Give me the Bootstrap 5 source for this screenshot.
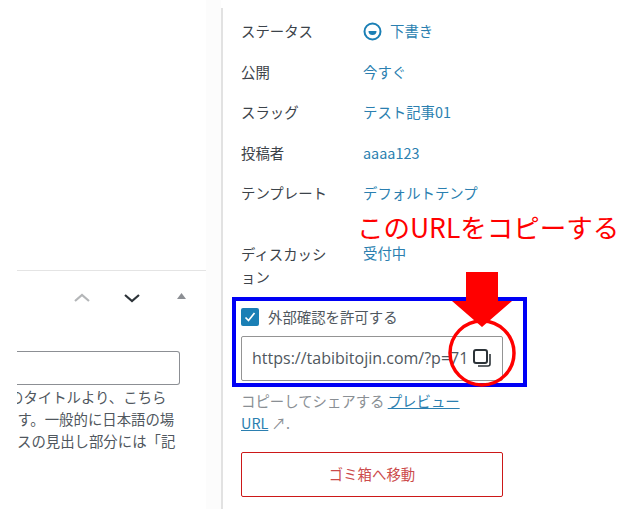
<!DOCTYPE html>
<html lang="ja"><head><meta charset="utf-8">
<link href="https://cdn.jsdelivr.net/npm/bootstrap@5.3.0/dist/css/bootstrap.min.css" rel="stylesheet">
<style>
html,body{margin:0;background:#fff;overflow:hidden}
body{font-family:"Noto Sans CJK JP","Noto Sans",sans-serif;font-size:14.4px;color:#3c434a;line-height:20px}
.stage{position:relative;width:628px;height:509px;overflow:hidden}
.leftpane{width:221px;padding-left:17px;flex:none;background:linear-gradient(90deg,#fff 206px,#fcfcfc 206px)}
.rule-top{height:1px;background:#e4e4e4;margin-top:270px;width:189px}
.tools{height:80px;width:189px;padding-top:17px}
.tools svg{display:block}
.blank-input{height:34px;width:163px;border:1px solid #8c8f94;border-left:0;border-radius:0 3px 3px 0;background:#fff}
.helptext{width:172px;font-size:14.4px;line-height:22px;margin-top:0;color:#50575e;white-space:nowrap;overflow:hidden;padding-top:1px}
.ln-a{margin-left:-8px}
.ln-b{margin-left:-14px}
.sidepane{width:275px;height:501px;margin-top:8px;border-left:2px solid #e2e2e2;padding:3px 0 0 18px;flex:none;background:#fff}
.meta-row{height:40.5px;display:flex;align-items:center}
.meta-k{width:122px;flex:none;color:#3c434a}
.meta-v{color:#2b7fb0;white-space:nowrap}
.meta-wrap{height:62px;align-items:flex-start;padding-top:16px;margin-top:12px}
.meta-wrap .meta-k{width:122px;padding-right:30px;line-height:23px}
.meta-wrap .meta-v{margin-top:1px}
.chk-row{margin-top:19px;height:20px;gap:9px;color:#50575e}
.chk-box{width:18px;height:18px;background:#1a7fb5;border-radius:2px;flex:none}
.url-field{width:262px;height:45px;border:1px solid #949494;border-radius:2px;margin-top:9px;padding-left:10px;font-family:"Open Sans","Noto Sans",sans-serif;font-size:16px;color:#50575e;background:#fff;overflow:hidden}
.url-field span{flex:1;white-space:nowrap;overflow:hidden}
.url-field svg{margin-right:10px;flex:none}
.sharehelp{width:235px;margin-top:9px;line-height:22px;color:#8a8f94}
.sharehelp a{color:#2b7fb0}
.trash{width:262px;height:45px;margin-top:18px;border:1px solid #cc1818;border-radius:2px;color:#cc4b4b}
.blue-frame{position:absolute;left:232px;top:297px;width:295px;height:90px;border:4px solid #0000f5}
.callout{position:absolute;left:357px;top:208px;font-size:26.5px;line-height:38px;color:#f00;white-space:nowrap;font-family:"Noto Sans CJK JP",sans-serif;background:#fff;padding-right:4px}
.overlay-svg{position:absolute;left:0;top:0}
</style></head><body>
<div class="stage d-flex">
  <div class="leftpane">
    <div class="rule-top"></div>
    <div class="tools d-flex align-items-start">
      <svg width="189" height="16" viewBox="0 0 189 16"><path d="M58 13l7-6 7 6" fill="none" stroke="#b4b6b8" stroke-width="2.2"/><path d="M108 7l7 6 7-6" fill="none" stroke="#2c3338" stroke-width="2.2"/><path d="M160 11l4.500-6 4.500 6z" fill="#8c8f94"/></svg>
    </div>
    <div class="blank-input"></div>
    <div class="helptext"><div class="ln-a">のタイトルより、こちら</div><div class="ln-b">です。一般的に日本語の場</div><div>スの見出し部分には「記</div></div>
  </div>
  <div class="sidepane">
    <div class="meta-row"><div class="meta-k">ステータス</div><div class="meta-v d-flex align-items-center gap-2"><svg width="19" height="19" viewBox="0 0 19 19"><circle cx="9.500" cy="9.500" r="8" fill="none" stroke="#1a7fb5" stroke-width="2"/><path d="M5.500 9h8a4 4 0 0 1-8 0z" fill="#1a7fb5"/></svg><span>下書き</span></div></div>
    <div class="meta-row"><div class="meta-k">公開</div><div class="meta-v">今すぐ</div></div>
    <div class="meta-row"><div class="meta-k">スラッグ</div><div class="meta-v">テスト記事01</div></div>
    <div class="meta-row"><div class="meta-k">投稿者</div><div class="meta-v">aaaa123</div></div>
    <div class="meta-row"><div class="meta-k">テンプレート</div><div class="meta-v">デフォルトテンプ</div></div>
    <div class="meta-row meta-wrap"><div class="meta-k">ディスカッション</div><div class="meta-v">受付中</div></div>
    <div class="chk-row d-flex align-items-center"><span class="chk-box d-flex align-items-center justify-content-center"><svg width="14" height="14" viewBox="0 0 14 14"><path d="M2.500 7.500l3 3 6-7.500" fill="none" stroke="#fff" stroke-width="1.700"/></svg></span><span>外部確認を許可する</span></div>
    <div class="url-field d-flex align-items-center"><span>https://tabibitojin.com/?p=71</span><svg width="20" height="20" viewBox="0 0 20 20"><rect x="2" y="2" width="13" height="13" rx="2" fill="none" stroke="#2c3338" stroke-width="2"/><path d="M18 6v10a2 2 0 0 1-2 2H6" fill="none" stroke="#2c3338" stroke-width="1.600"/></svg></div>
    <div class="sharehelp">コピーしてシェアする <a href="#">プレビュー URL</a> ↗.</div>
    <div class="trash d-flex align-items-center justify-content-center">ゴミ箱へ移動</div>
  </div>
  <div class="blue-frame"></div>
  <div class="callout">このURLをコピーする</div>
  <svg class="overlay-svg" width="628" height="509" viewBox="0 0 628 509"><circle cx="482" cy="353" r="32" fill="none" stroke="#f00" stroke-width="3.500"/><path d="M466 272h32v29h14l-30 26-30-26h14z" fill="#f00"/></svg>
</div>
<script src="https://cdn.jsdelivr.net/npm/bootstrap@5.3.0/dist/js/bootstrap.bundle.min.js"></script>
</body></html>
